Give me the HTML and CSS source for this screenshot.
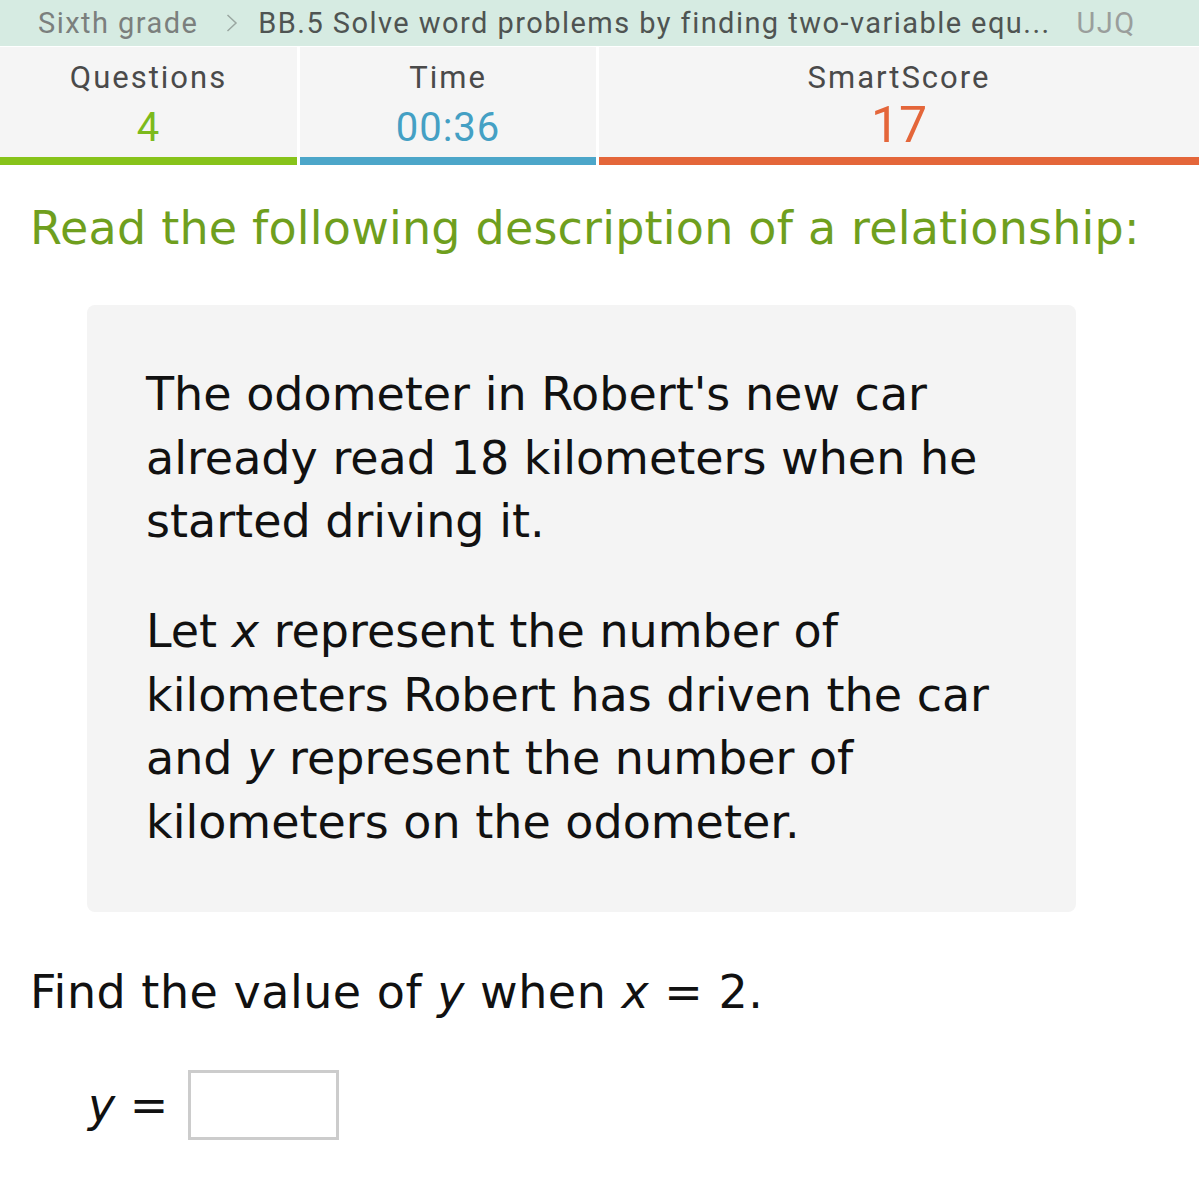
FILE: index.html
```html
<!DOCTYPE html>
<html>
<head>
<meta charset="utf-8">
<link rel="stylesheet" href="styles.css">
</head>
<body>
<div class="crumbs">
  <span class="crumb-grade">Sixth grade</span>
  <svg class="chev" width="12" height="18" viewBox="0 0 12 18"><path d="M1.5 1 L10 9 L1.5 17" fill="none" stroke="#9aa7a1" stroke-width="1.5"/></svg>
  <span class="crumb-skill">BB.5 Solve word problems by finding two-variable equ...</span>
  <span class="crumb-code">UJQ</span>
</div>
<div class="stats">
  <div class="stat stat-q">
    <div class="stat-label">Questions</div>
    <div class="stat-value">4</div>
  </div>
  <div class="stat stat-t">
    <div class="stat-label">Time</div>
    <div class="stat-value">00:36</div>
  </div>
  <div class="stat stat-s">
    <div class="stat-label">SmartScore</div>
    <div class="stat-value">17</div>
  </div>
</div>
<main class="content">
  <h1 class="prompt">Read the following description of a relationship:</h1>
  <div class="card">
    <p>The odometer in Robert's new car already read 18 kilometers when he started driving it.</p>
    <p>Let <i>x</i> represent the number of kilometers Robert has driven the car and <i>y</i> represent the number of kilometers on the odometer.</p>
  </div>
  <p class="question">Find the value of <i>y</i> when <i>x</i> = 2.</p>
  <div class="answer">
    <span class="answer-label"><i>y</i> =</span>
    <span class="answer-box"></span>
  </div>
</main>
</body>
</html>
```
FILE: styles.css
```css
html, body {
  margin: 0;
  padding: 0;
  background: #ffffff;
}
body {
  width: 1199px;
  overflow: hidden;
}
.crumbs {
  height: 46px;
  background: #d6ebe2;
  display: flex;
  align-items: center;
  padding-left: 38px;
  font-family: Roboto, "Liberation Sans", sans-serif;
  font-size: 29px;
  letter-spacing: 1.45px;
  white-space: nowrap;
}
.crumb-grade { color: #7b7f7d; }
.chev { margin: 0 20px 0 28px; }
.crumb-skill { color: #4f5452; }
.crumb-code { color: #9a9e9c; margin-left: 26px; }
.stats {
  display: flex;
  gap: 3px;
  background: #ffffff;
  padding-top: 1px;
}
.stat {
  background: #f5f5f5;
  height: 118px;
  border-bottom: 8px solid #000;
  box-sizing: border-box;
  display: flex;
  flex-direction: column;
  align-items: center;
  font-family: Roboto, "Liberation Sans", sans-serif;
}
.stat-q { width: 297px; border-bottom-color: #87c31a; }
.stat-t { width: 296px; border-bottom-color: #4ca6c9; }
.stat-s { flex: 1; border-bottom-color: #e4663a; }
.stat-label {
  color: #4a4a4a;
  font-size: 31px;
  letter-spacing: 2px;
  margin-top: 13px;
  line-height: 36px;
}
.stat-value {
  font-size: 40px;
  line-height: 48px;
  margin-top: 8px;
  letter-spacing: 1px;
}
.stat-q .stat-value { color: #7cba1c; }
.stat-t .stat-value { color: #44a0c4; }
.stat-s .stat-value { color: #e4663a; font-size: 50px; margin-top: 5px; letter-spacing: 0; }
.content {
  font-family: "DejaVu Sans", Verdana, sans-serif;
  padding: 0 30px;
}
.prompt {
  margin: 0;
  padding-top: 37px;
  font-weight: normal;
  font-size: 46px;
  letter-spacing: 0.2px;
  line-height: 52px;
  color: #6f9f1e;
}
.card {
  margin: 51px 0 0 57px;
  width: 989px;
  box-sizing: border-box;
  background: #f4f4f4;
  border-radius: 8px;
  padding: 58px 59px 58px 59px;
  color: #111;
  font-size: 46px;
  line-height: 63.5px;
}
.card p { margin: 0; }
.card p + p { margin-top: 46.5px; }
.question {
  margin: 50px 0 0 0;
  font-size: 46px;
  letter-spacing: 0.5px;
  line-height: 60px;
  color: #111;
}
.answer {
  display: flex;
  align-items: center;
  margin: 48px 0 0 58px;
  font-size: 46px;
  color: #111;
}
.answer-label { margin-right: 20px; }
.answer-box {
  width: 151px;
  height: 70px;
  box-sizing: border-box;
  border: 3px solid #cccccc;
  background: #fff;
}
```
